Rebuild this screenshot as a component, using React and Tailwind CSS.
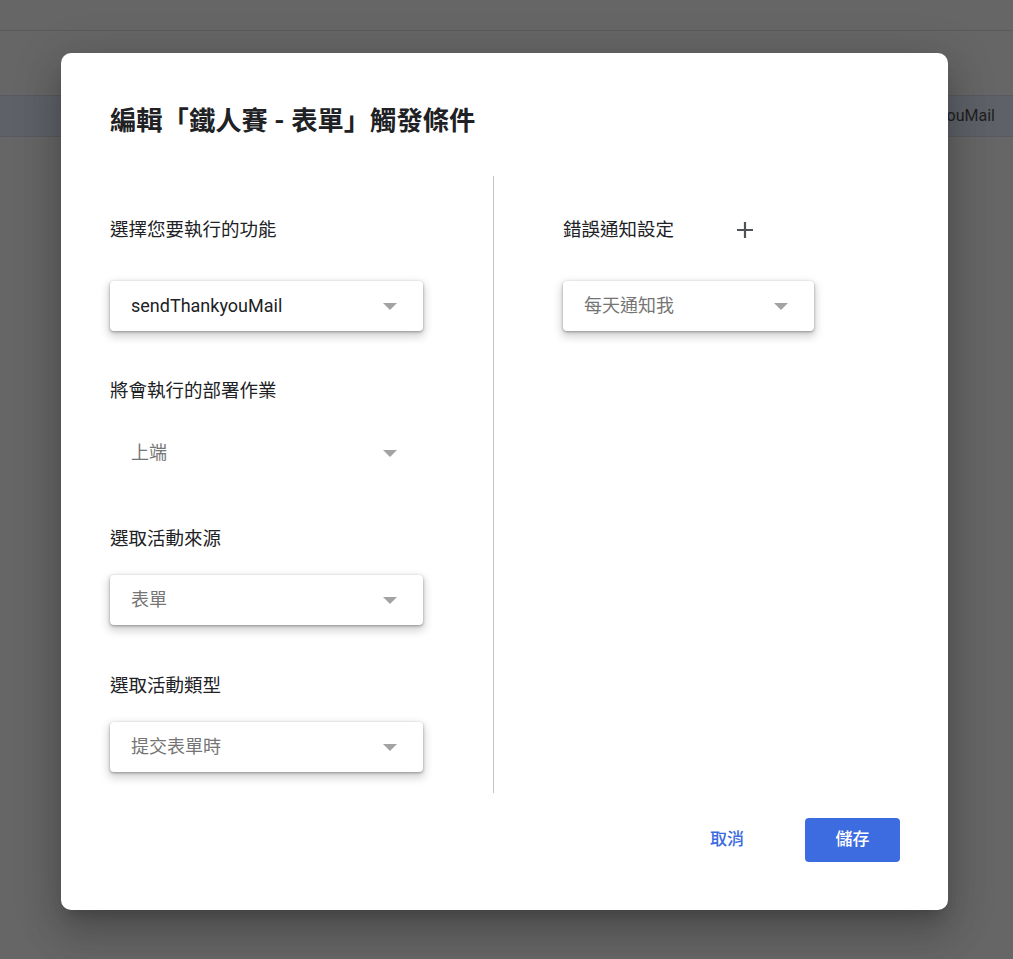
const font = "font-[Roboto,'Noto_Sans_CJK_TC',sans-serif]";

const Caret = () => (
  <svg width="14" height="7" viewBox="0 0 14 7" className="shrink-0">
    <polygon points="0,0 14,0 7,7" fill="#a3a3a3" />
  </svg>
);

const Select = ({ value, placeholder, flat, className = "" }) => (
  <div
    className={`flex h-[50px] items-center justify-between rounded-[4px] bg-white pl-[21px] pr-[26px] ${
      flat ? "" : "shadow-[0_1px_3px_rgba(0,0,0,0.35),0_4px_9px_2px_rgba(0,0,0,0.17)]"
    } ${className}`}
  >
    <span
      className={`text-[18px] leading-[24px] ${
        placeholder ? "text-[#757575]" : "text-[#202124]"
      }`}
    >
      {value}
    </span>
    <Caret />
  </div>
);

const Label = ({ children, className = "" }) => (
  <div className={`text-[18.5px] leading-[24px] text-[#202124] ${className}`}>
    {children}
  </div>
);

export default function App() {
  return (
    <div className={`relative h-[959px] w-full overflow-hidden bg-[#666666] ${font}`}>
      {/* dimmed page behind the dialog */}
      <div className="h-[31px] border-b border-[#5b5b5b]" />
      <div className="h-[64px]" />
      <div className="flex h-[42px] items-center justify-end border-y border-[#585a5f] bg-[#5e6168] pr-[18px]">
        <span className="text-[16px] text-[#1f1f1f]">sendThankyouMail</span>
      </div>

      {/* dialog */}
      <div className="absolute inset-0 flex items-center justify-center">
        <div className="mt-[4px] mr-[4px] w-[887px] rounded-[10px] bg-white pb-[48px] pl-[49px] pr-[48px] pt-[52px] shadow-[0_24px_38px_3px_rgba(0,0,0,0.14),0_9px_46px_8px_rgba(0,0,0,0.12),0_11px_15px_-7px_rgba(0,0,0,0.2)]">
          <h2 className="text-[26.3px] font-bold leading-[32px] text-[#202124]">
            編輯「鐵人賽 - 表單」觸發條件
          </h2>

          <div className="mt-[39px] flex">
            {/* left column */}
            <div className="w-[383px] pb-[21px] pt-[42px]">
              <Label>選擇您要執行的功能</Label>
              <Select value="sendThankyouMail" className="mt-[39px] w-[313px]" />

              <Label className="mt-[48px]">將會執行的部署作業</Label>
              <Select value="上端" placeholder flat className="mt-[25px] w-[313px]" />

              <Label className="mt-[49px]">選取活動來源</Label>
              <Select value="表單" placeholder className="mt-[24px] w-[313px]" />

              <Label className="mt-[49px]">選取活動類型</Label>
              <Select value="提交表單時" placeholder className="mt-[24px] w-[313px]" />
            </div>

            {/* right column */}
            <div className="flex-1 border-l border-[#c4c4c4] pl-[69px] pt-[42px]">
              <div className="flex items-center">
                <Label>錯誤通知設定</Label>
                <svg width="18" height="18" viewBox="0 0 18 18" className="ml-[62px]">
                  <path d="M9 1v16M1 9h16" stroke="#4f5256" strokeWidth="2.2" />
                </svg>
              </div>
              <Select value="每天通知我" placeholder className="mt-[39px] w-[251px]" />
            </div>
          </div>

          <div className="mt-[25px] flex items-center justify-end">
            <button className="mr-[45px] h-[44px] px-[16px] text-[17px] font-medium text-[#3b6be0]">
              取消
            </button>
            <button className="h-[44px] w-[95px] rounded-[4px] bg-[#3d6ce0] text-[17px] font-medium text-white">
              儲存
            </button>
          </div>
        </div>
      </div>
    </div>
  );
}
